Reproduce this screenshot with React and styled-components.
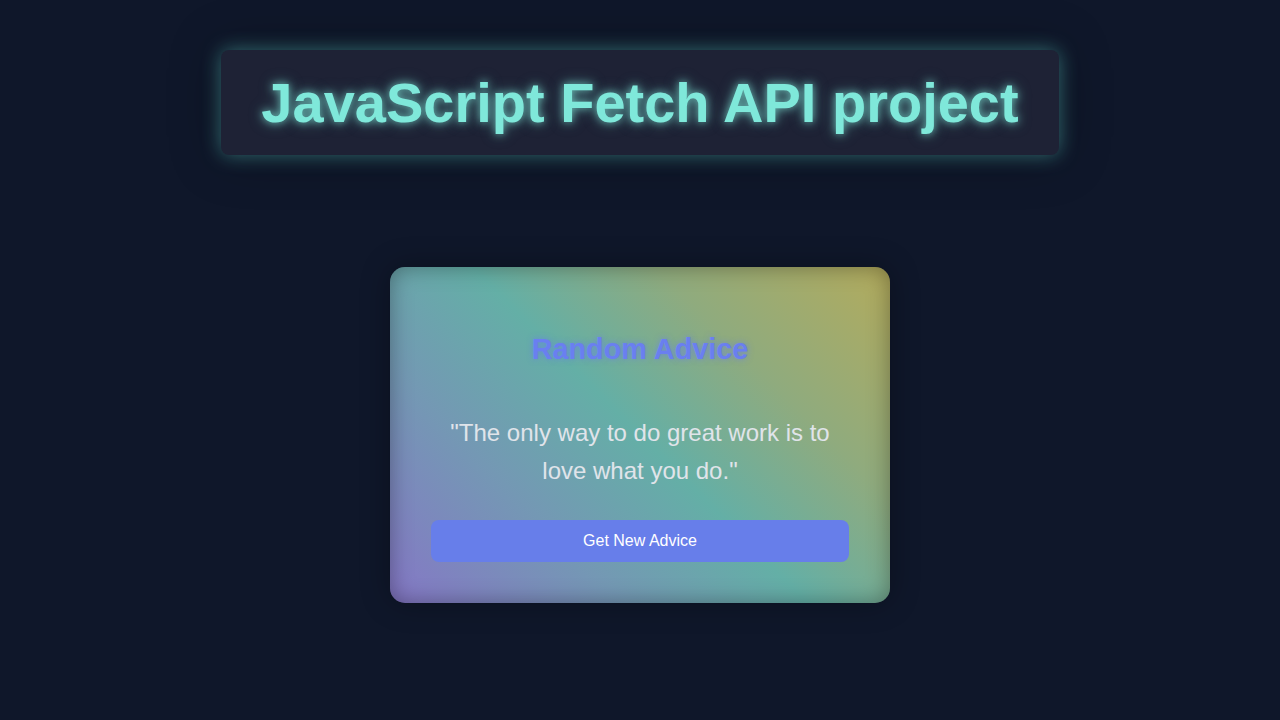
import React from "react";
import styled, { createGlobalStyle } from "styled-components";

const GlobalStyle = createGlobalStyle`
    * {
        box-sizing: border-box;
    }
    body {
        margin: 0;
        background: #0f172a;
        font-family: "Liberation Sans", Arial, sans-serif;
    }
`;

const Page = styled.div`
    min-height: 100vh;
    display: flex;
    flex-direction: column;
    align-items: center;
    padding-top: 50px;
`;

const Header = styled.header`
    width: 838px;
    height: 105px;
    display: flex;
    align-items: center;
    justify-content: center;
    background: #1e2235;
    border-radius: 8px;
    box-shadow: 0 0 20px rgba(100, 220, 210, 0.45),
        0 0 50px rgba(0, 0, 0, 0.35);
`;

const Title = styled.h1`
    margin: 0;
    font-size: 56px;
    font-weight: 700;
    color: #7fe8da;
    text-shadow: 0 0 8px rgba(127, 232, 218, 0.75),
        0 0 16px rgba(127, 232, 218, 0.35);
`;

const Card = styled.section`
    margin-top: 112px;
    width: 500px;
    height: 336px;
    padding: 40px 41px;
    border-radius: 15px;
    display: flex;
    flex-direction: column;
    align-items: center;
    background: linear-gradient(
        45deg,
        #8577c6 0%,
        #7498b4 28%,
        #64afa6 50%,
        #8fab7e 72%,
        #b3ab5c 100%
    );
    box-shadow: inset 0 0 22px rgba(0, 0, 0, 0.35),
        0 0 30px rgba(0, 0, 0, 0.3);
`;

const CardTitle = styled.h2`
    margin: 26px 0 0;
    font-size: 28.8px;
    font-weight: 700;
    color: #6a7ff0;
    text-shadow: 0 0 6px rgba(102, 126, 234, 0.8);
`;

const Quote = styled.p`
    margin: 48px 0 0;
    font-size: 24px;
    line-height: 38px;
    text-align: center;
    color: #e0e4ea;
`;

const Button = styled.button`
    margin-top: 30px;
    width: 100%;
    height: 42px;
    border: none;
    border-radius: 8px;
    background: #677eea;
    color: #ffffff;
    font-family: inherit;
    font-size: 16px;
    cursor: pointer;
`;

const App = () => {
    return (
        <Page>
            <GlobalStyle />
            <Header>
                <Title>JavaScript Fetch API project</Title>
            </Header>
            <Card>
                <CardTitle>Random Advice</CardTitle>
                <Quote>
                    "The only way to do great work is to love what you do."
                </Quote>
                <Button>Get New Advice</Button>
            </Card>
        </Page>
    );
};

export default App;
